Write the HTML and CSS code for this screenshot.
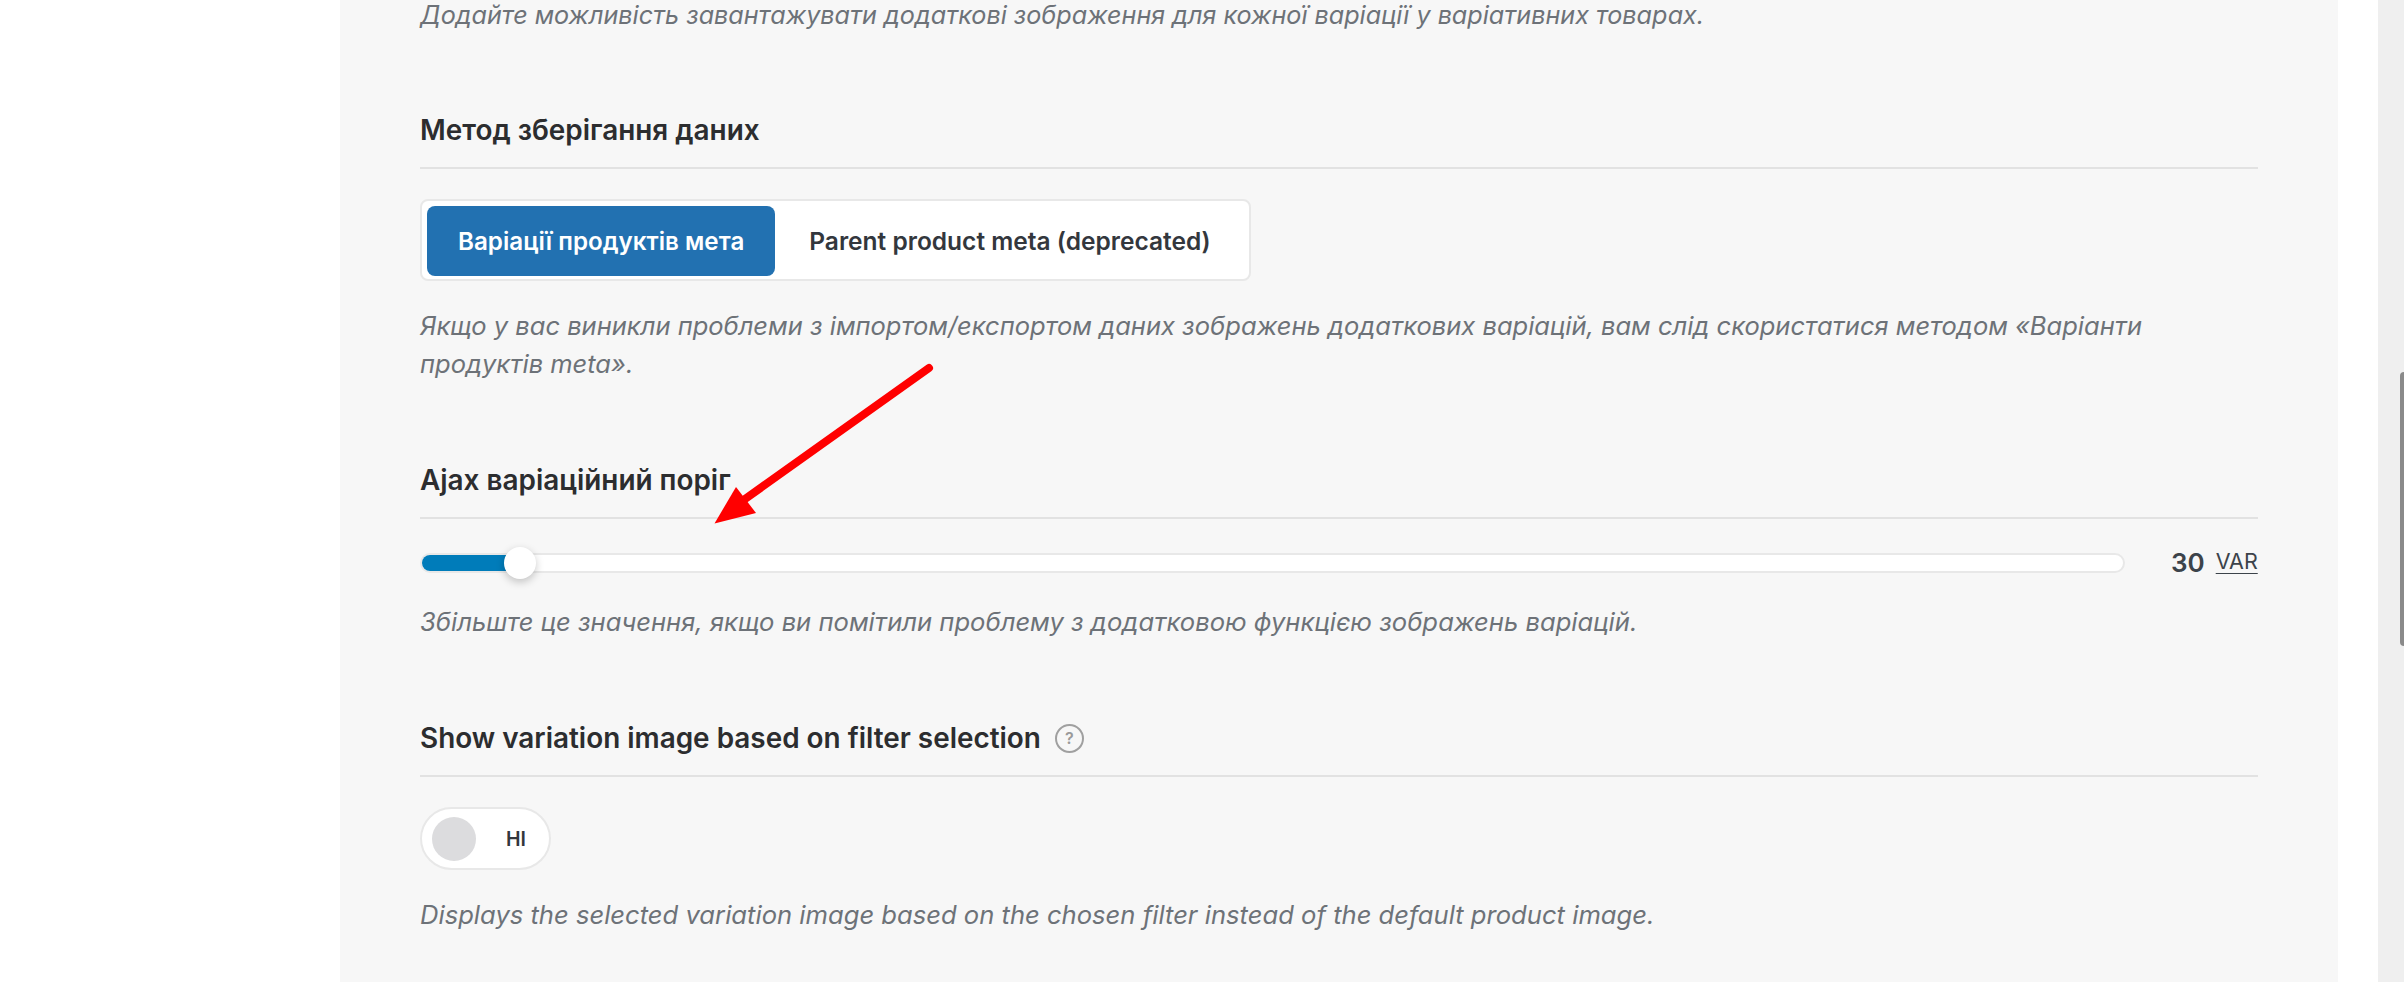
FILE: index.html
```html
<!DOCTYPE html>
<html lang="uk">
<head>
<meta charset="utf-8">
<title>Налаштування</title>
<link rel="stylesheet" href="styles.css">
</head>
<body>
<div class="page">
  <aside class="side"></aside>
  <main class="panel">
    <p class="desc desc-top">Додайте можливість завантажувати додаткові зображення для кожної варіації у варіативних товарах.</p>

    <section class="field field-method">
      <h2 class="title">Метод зберігання даних</h2>
      <div class="segment">
        <span class="seg-btn seg-active">Варіації продуктів мета</span>
        <span class="seg-btn">Parent product meta (deprecated)</span>
      </div>
      <p class="desc desc-method">Якщо у вас виникли проблеми з імпортом/експортом даних зображень додаткових варіацій, вам слід скористатися методом «Варіанти продуктів meta».</p>
    </section>

    <section class="field field-ajax">
      <h2 class="title">Ajax варіаційний поріг</h2>
      <div class="slider-row">
        <div class="track">
          <div class="fill"></div>
          <div class="thumb"></div>
        </div>
        <span class="value">30</span>
        <span class="unit">VAR</span>
      </div>
      <p class="desc desc-ajax">Збільште це значення, якщо ви помітили проблему з додатковою функцією зображень варіацій.</p>
    </section>

    <section class="field field-filter">
      <h2 class="title title-help">Show variation image based on filter selection <span class="help">?</span></h2>
      <div class="toggle"><span class="knob"></span><span class="toggle-label">НІ</span></div>
      <p class="desc desc-filter">Displays the selected variation image based on the chosen filter instead of the default product image.</p>
    </section>
  </main>
  <div class="gutter"></div>
  <div class="scrollbar"><div class="scroll-thumb"></div></div>
</div>
<svg class="arrow" width="2404" height="982" viewBox="0 0 2404 982" aria-hidden="true">
  <line x1="929" y1="368" x2="738" y2="504" stroke="#ff0000" stroke-width="8" stroke-linecap="round"></line>
  <polygon points="714.5,523.5 736,487 756,513" fill="#ff0000"></polygon>
</svg>
</body>
</html>
```

FILE: styles.css
```css
* { box-sizing: border-box; }
html, body { margin: 0; padding: 0; height: 982px; overflow: hidden; background: #fff; }
body { font-family: Inter, "Liberation Sans", sans-serif; color: #2c2d2f; }
.page { display: flex; height: 982px; width: 2404px; }
.side { width: 340px; flex: none; background: #fff; }
.panel { width: 1998px; flex: none; background: #f7f7f7; padding: 0 80px; }
.gutter { width: 40px; flex: none; background: #fff; }
.scrollbar { width: 26px; flex: none; background: #efefef; display: flex; justify-content: flex-end; padding-top: 372px; }
.scroll-thumb { width: 4px; height: 274px; background: #8a8a8a; border-radius: 4px 0 0 4px; align-self: flex-start; }

.desc { margin: 0; font-size: 25.6px; line-height: 38px; font-style: italic; color: #6d7278; }
.desc-top { margin-top: -4px; font-size: 25.15px; }
.field { display: block; }
.field-method { margin-top: 80px; }
.field-ajax { margin-top: 81px; }
.field-filter { margin-top: 81px; }

.title { margin: 0; font-size: 27.9px; line-height: 32px; font-weight: 600; color: #2c2d2f; padding-bottom: 21px; border-bottom: 2px solid #e2e2e2; }
.title-help { display: flex; align-items: center; gap: 14px; }
.help { width: 29px; height: 29px; border: 2px solid #a0a0a0; border-radius: 50%; display: flex; align-items: center; justify-content: center; font-size: 16px; font-weight: 600; color: #9a9a9a; }

.segment { display: inline-flex; margin-top: 30px; padding: 5px; height: 82px; background: #fff; border: 2px solid #e8e8e8; border-radius: 8px; vertical-align: top; }
.seg-btn { display: flex; align-items: center; justify-content: center; height: 70px; padding: 0 33px 0 34px; font-size: 24.5px; font-weight: 600; color: #33373d; border-radius: 8px; }
.seg-active { background: #2271b1; color: #fff; padding: 0 31px 0 31px; font-size: 24.2px; }
.desc-method { margin-top: 26px; font-size: 25.5px; }

.slider-row { display: flex; align-items: center; margin-top: 28px; height: 32px; }
.track { position: relative; width: 1705px; height: 20px; flex: none; background: #fff; border: 2px solid #e8e8e8; border-radius: 10px; }
.fill { width: 84px; height: 16px; background: #007cba; border-radius: 8px 0 0 8px; }
.thumb { position: absolute; left: 82px; top: -8px; width: 32px; height: 32px; border-radius: 50%; background: #fff; box-shadow: 0 3px 8px rgba(0,0,0,.22); }
.value { margin-left: 46px; font-size: 26px; font-weight: 600; color: #3c434a; line-height: 32px; }
.unit { margin-left: 11px; font-size: 21.5px; line-height: 26px; color: #3c434a; text-decoration: underline; text-underline-offset: 4px; text-decoration-thickness: 1px; position: relative; top: -2px; }
.desc-ajax { margin-top: 24px; }

.toggle { display: flex; align-items: center; width: 131px; height: 63px; margin-top: 30px; padding-left: 10px; background: #fff; border: 2px solid #e8e8e8; border-radius: 32px; }
.knob { width: 44px; height: 44px; border-radius: 50%; background: #dcdcde; flex: none; }
.toggle-label { margin-left: 30px; font-size: 19.5px; font-weight: 600; color: #33373d; }
.desc-filter { margin-top: 26px; }

.arrow { position: absolute; left: 0; top: 0; pointer-events: none; }
```
